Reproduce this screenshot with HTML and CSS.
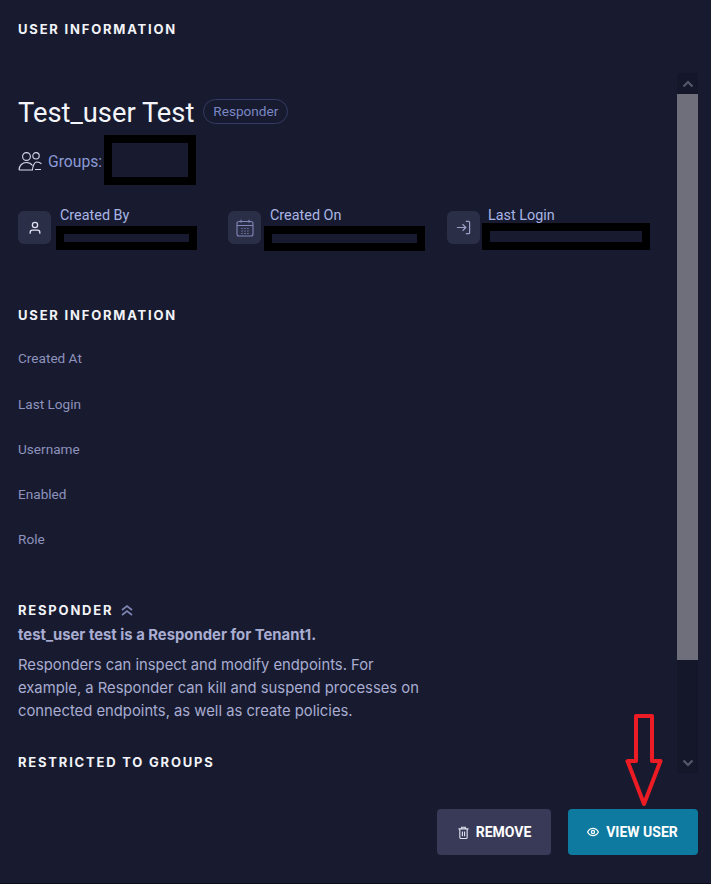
FILE: index.html
```html
<!DOCTYPE html>
<html lang="en">
<head>
<meta charset="utf-8">
<title>User information</title>
<link rel="stylesheet" href="styles.css">
</head>
<body>
<main class="panel">
  <h2 class="heading top-heading">USER INFORMATION</h2>
  <div class="scroller">
    <div class="content">
      <div class="title-row">
        <h1 class="name">Test_user Test</h1>
        <span class="badge">Responder</span>
      </div>
      <div class="groups">
        <svg class="groups-icon" viewBox="0 0 24 20" width="24" height="20" fill="none" stroke="currentColor" stroke-width="1.1"><circle cx="8.5" cy="5.5" r="3.9"/><circle cx="18" cy="4.8" r="3.2"/><path d="M1 19h14M1 19c0-4 3-7.500 7.500-7.500 2.500 0 4.500 1 6 3M14.500 19c0-3.500 2-8 4-8 2 0 4 .5 5 2M17 18.500h6"/></svg>
        <span>Groups:</span>
        <span class="redact redact-groups"></span>
      </div>
      <div class="meta-row">
        <div class="meta meta-by">
          <span class="tile"><svg viewBox="0 0 16 16" width="14" height="14" fill="none" stroke="#dfe2f0" stroke-width="1.500"><circle cx="8" cy="4.500" r="3"/><path d="M2.500 14.500v-1.500c0-1.500 1-2.500 2.500-2.500h6c1.500 0 2.500 1 2.500 2.500v1.500"/></svg></span>
          <span class="meta-label">Created By</span>
          <span class="redact redact-by"></span>
        </div>
        <div class="meta meta-on">
          <span class="tile"><svg viewBox="0 0 18 18" width="18" height="18" fill="none" stroke="#7f88b8" stroke-width="1.100"><rect x="1" y="2.500" width="16" height="14.500" rx="2"/><path d="M1 6.500h16M5 .8v3M13 .8v3"/><path d="M5.500 9.500h7M5.500 12h7M5.500 14.500h7" stroke-dasharray="1.200 1.700"/></svg></span>
          <span class="meta-label">Created On</span>
          <span class="redact redact-on"></span>
        </div>
        <div class="meta meta-login">
          <span class="tile"><svg viewBox="0 0 16 16" width="15" height="15" fill="none" stroke="#9aa1c6" stroke-width="1.300"><path d="M1 8h9M7 4.500 10.500 8 7 11.500M10.500 1.500h3a1 1 0 0 1 1 1v11a1 1 0 0 1-1 1h-3"/></svg></span>
          <span class="meta-label meta-label-login">Last Login</span>
          <span class="redact redact-login"></span>
        </div>
      </div>
      <h2 class="heading info-heading">USER INFORMATION</h2>
      <dl class="fields">
        <dt>Created At</dt>
        <dt>Last Login</dt>
        <dt>Username</dt>
        <dt>Enabled</dt>
        <dt>Role</dt>
      </dl>
      <div class="role-heading">
        <h2 class="heading">RESPONDER</h2>
        <svg viewBox="0 0 12 12" width="12" height="12" fill="none" stroke="#7f86b4" stroke-width="1.700"><path d="M1 6 6 2l5 4M1 11l5-4 5 4"/></svg>
      </div>
      <p class="role-strong">test_user test is a Responder for Tenant1.</p>
      <p class="role-text">Responders can inspect and modify endpoints. For example, a Responder can kill and suspend processes on connected endpoints, as well as create policies.</p>
      <h2 class="heading restrict-heading">RESTRICTED TO GROUPS</h2>
    </div>
    <div class="scrollbar">
      <span class="sb-btn"><svg viewBox="0 0 12 8" width="12" height="8" fill="none" stroke="#55586a" stroke-width="2.200"><path d="M1.500 6.500 6 2l4.500 4.500"/></svg></span>
      <span class="sb-thumb"></span>
      <span class="sb-track"></span>
      <span class="sb-btn"><svg viewBox="0 0 12 8" width="12" height="8" fill="none" stroke="#55586a" stroke-width="2.200"><path d="M1.500 1.500 6 6l4.500-4.500"/></svg></span>
    </div>
  </div>
  <div class="actions">
    <button class="btn btn-remove" type="button">
      <svg viewBox="0 0 12 14" width="11" height="13" fill="none" stroke="#e4e6f2" stroke-width="1.200"><path d="M.5 3h11M4 3V1.200h4V3M2 3v9.500a1 1 0 0 0 1 1h6a1 1 0 0 0 1-1V3M4.800 6v5M7.200 6v5"/></svg>
      REMOVE
    </button>
    <button class="btn btn-view" type="button">
      <svg viewBox="0 0 14 10" width="12" height="10" fill="none" stroke="#fff" stroke-width="1.500"><path d="M.7 5C2.200 2.200 4.400.8 7 .8s4.800 1.400 6.300 4.200C11.800 7.800 9.600 9.200 7 9.200S2.200 7.800.7 5Z"/><circle cx="7" cy="5" r="1.800"/></svg>
      VIEW USER
    </button>
  </div>
  <svg class="arrow" viewBox="0 0 40 96" width="40" height="96" fill="none" stroke="#ed1c24" stroke-width="4" stroke-linejoin="round"><path d="M11 3H27V48H35.500L19 91 2.500 48H11Z"/></svg>
</main>
</body>
</html>
```

FILE: styles.css
```css
* { box-sizing: border-box; }
html, body { margin: 0; padding: 0; background: #181b2f; }
body { font-family: Roboto, "Liberation Sans", sans-serif; color: #b3b7da; }
.panel {
  position: relative;
  width: 711px;
  height: 884px;
  padding: 22px 13px 0 18px;
  background: #181b2f;
  border-bottom: 1px solid #0c0d16;
  overflow: hidden;
}
.heading {
  margin: 0;
  font-family: Inter, Roboto, sans-serif;
  font-size: 13px;
  line-height: 15px;
  font-weight: 700;
  letter-spacing: 1.8px;
  color: #f2f3f8;
}
.scroller {
  display: flex;
  height: 700px;
  margin-top: 36px;
}
.content { flex: 1; min-width: 0; padding-top: 26px; }
.title-row { display: flex; align-items: center; gap: 9px; height: 28px; }
.name { margin: 0; font-size: 27.300px; line-height: 28px; font-weight: 400; color: #f4f5fa; }
.badge {
  display: inline-flex;
  align-items: center;
  height: 25px;
  margin-top: -3px;
  padding: 0 9px 1px;
  border: 1px solid #343a63;
  border-radius: 13px;
  font-size: 13.6px;
  color: #7a87c4;
}
.groups {
  position: relative;
  display: flex;
  align-items: center;
  gap: 6px;
  margin-top: 23px;
  height: 22px;
  font-size: 15.700px;
  color: #8b9ad6;
}
.groups-icon { color: #d6d8ea; }
.redact { position: absolute; display: block; border: 8px solid #000; background: transparent; }
.redact-groups { left: 86px; top: -15px; width: 92px; height: 50px; }
.meta-row { display: flex; margin-top: 36px; height: 50px; }
.meta { position: relative; display: flex; align-items: flex-start; }
.meta-by { width: 210px; }
.meta-on { width: 219px; }
.meta-login { flex: 1; }
.tile {
  display: flex;
  align-items: center;
  justify-content: center;
  flex: none;
  width: 33px;
  height: 33px;
  margin-top: 3px;
  margin-right: 9px;
  border-radius: 6px;
  background: #2b2e47;
}
.meta-label { font-size: 14.400px; line-height: 16px; color: #a9b5e4; }
.meta-label-login { margin-left: -1px; }
.redact-by { left: 38px; top: 18px; width: 141px; height: 24px; }
.redact-on { left: 36px; top: 18px; width: 161px; height: 25px; }
.redact-login { left: 35px; top: 15px; width: 168px; height: 27px; }
.info-heading { margin-top: 50px; }
.fields { margin: 27.400px 0 0; display: flex; flex-direction: column; gap: 29.250px; }
.fields dt { font-size: 13.600px; line-height: 16px; color: #8e92bd; }
.role-heading { display: flex; align-items: center; gap: 8px; margin-top: 55.600px; }
.role-strong { margin: 9px 0 0; font-family: Inter, Roboto, sans-serif; font-size: 14.850px; line-height: 16px; font-weight: 700; color: #a9add2; }
.role-text { margin: 11.500px 0 0; width: 410px; font-family: Inter, Roboto, sans-serif; font-size: 14.800px; line-height: 23px; color: #a9add2; }
.restrict-heading { margin-top: 31.500px; }
.scrollbar { display: flex; flex-direction: column; flex: none; width: 21px; background: #14162a; }
.sb-btn { flex: none; height: 21px; display: flex; align-items: center; justify-content: center; background: #14162a; }
.sb-thumb { flex: none; height: 566px; background: #6e6f7a; }
.sb-track { flex: 1; }
.actions { display: flex; justify-content: flex-end; gap: 17px; margin-top: 36px; }
.btn {
  display: inline-flex;
  align-items: center;
  justify-content: center;
  gap: 7px;
  height: 46px;
  border: 0;
  border-radius: 4px;
  padding: 0;
  font-family: Roboto, sans-serif;
  font-size: 14px;
  font-weight: 700;
  color: #fff;
}
.btn-remove { width: 114px; padding-left: 1px; background: #383a57; }
.btn-view { width: 130px; padding-right: 1px; background: #0e7a9f; }
.arrow { position: absolute; left: 625px; top: 713px; }
```
